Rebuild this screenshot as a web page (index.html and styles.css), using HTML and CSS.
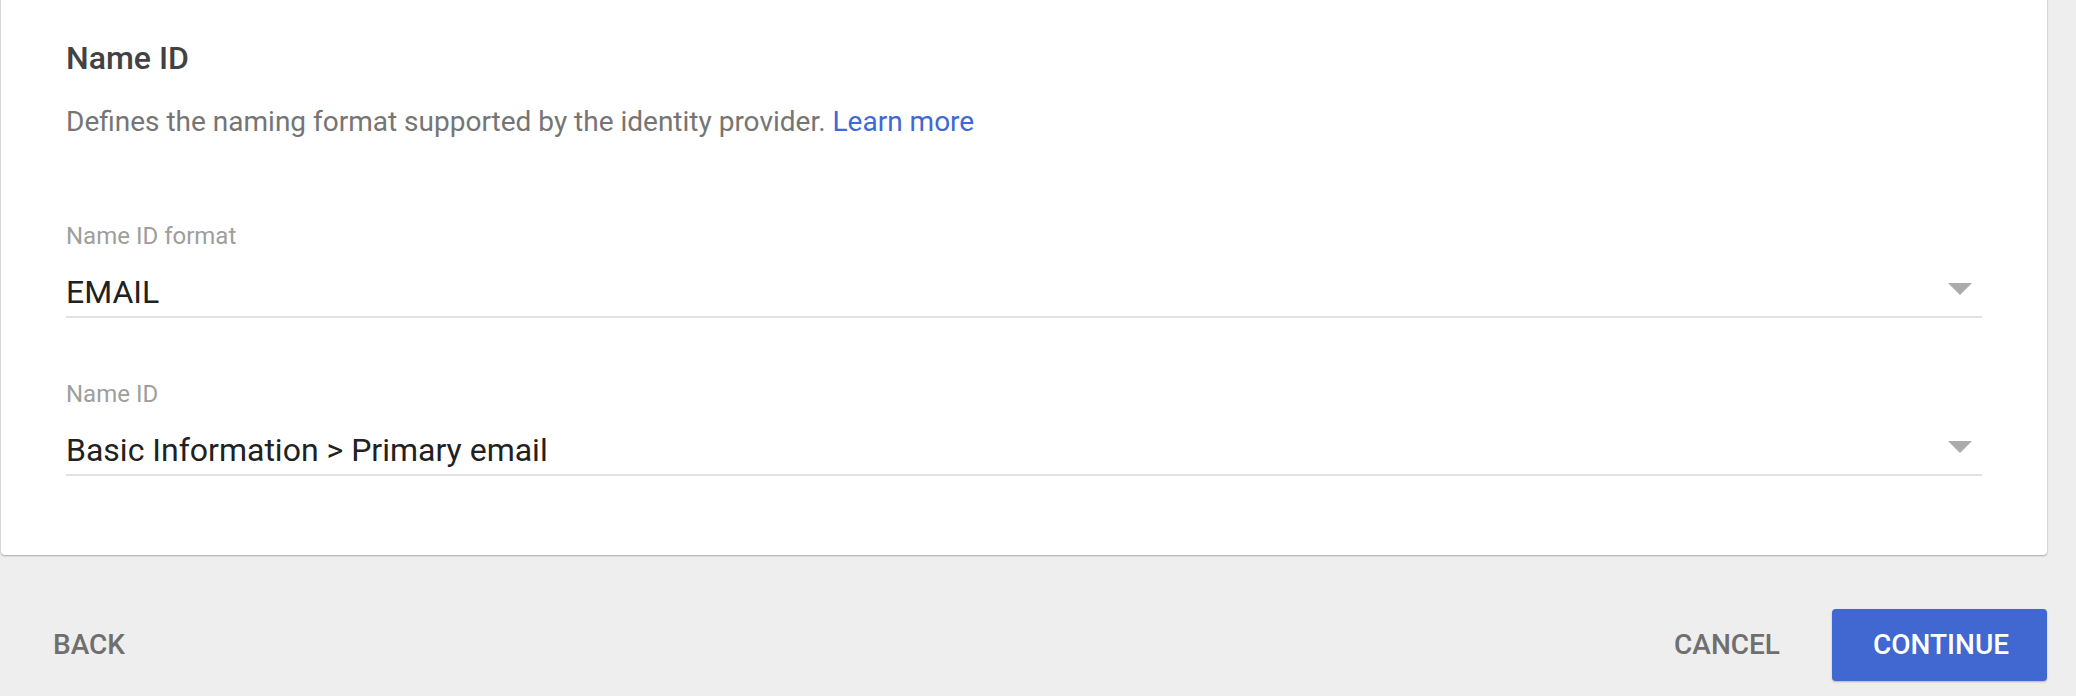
FILE: index.html
```html
<!DOCTYPE html>
<html lang="en">
<head>
<meta charset="utf-8">
<title>Name ID</title>
<link rel="stylesheet" href="styles.css">
</head>
<body>
<main class="page">
  <section class="card">
    <h2 class="card-title">Name ID</h2>
    <p class="card-desc">Defines the naming format supported by the identity provider. <a class="link" href="#">Learn more</a></p>

    <div class="field field-first">
      <div class="field-label">Name ID format</div>
      <div class="select">
        <span class="select-value">EMAIL</span>
        <span class="caret"></span>
      </div>
    </div>

    <div class="field">
      <div class="field-label">Name ID</div>
      <div class="select">
        <span class="select-value">Basic Information &gt; Primary email</span>
        <span class="caret"></span>
      </div>
    </div>
  </section>

  <footer class="actions">
    <button class="btn btn-text btn-back" type="button">Back</button>
    <div class="actions-right">
      <button class="btn btn-text" type="button">Cancel</button>
      <button class="btn btn-primary" type="button">Continue</button>
    </div>
  </footer>
</main>
</body>
</html>
```
FILE: styles.css
```css
* { box-sizing: border-box; }

html, body {
  margin: 0;
  padding: 0;
}

body {
  background: #eeeeee;
  font-family: Roboto, "Liberation Sans", Arial, sans-serif;
  width: 2076px;
  height: 696px;
  overflow: hidden;
}

.page {
  display: flex;
  flex-direction: column;
}

.card {
  margin: -6px 0 0 1px;
  width: 2046px;
  background: #ffffff;
  border-radius: 0 0 4px 4px;
  box-shadow: 0 1px 2px rgba(0, 0, 0, 0.28), 0 0 1px rgba(0, 0, 0, 0.22);
  padding: 44px 65px 79px 65px;
}

.card-title {
  margin: 0;
  font-size: 32px;
  line-height: 40px;
  font-weight: 500;
  color: #424242;
}

.card-desc {
  margin: 26px 0 0 0;
  font-size: 28px;
  line-height: 36px;
  color: #757575;
}

.link {
  color: #3f68d3;
  text-decoration: none;
}

.field {
  margin-top: 60px;
}

.field-first {
  margin-top: 80px;
}

.field-label {
  font-size: 24px;
  line-height: 32px;
  color: #9e9e9e;
}

.select {
  margin-top: 20px;
  display: flex;
  align-items: center;
  justify-content: space-between;
  padding-bottom: 4px;
  border-bottom: 2px solid #e2e2e2;
}

.select-value {
  font-size: 32px;
  line-height: 40px;
  color: #212121;
}

.caret {
  width: 0;
  height: 0;
  border-left: 12px solid transparent;
  border-right: 12px solid transparent;
  border-top: 12px solid #ababab;
  margin: 0 10px 7px 0;
}

.actions {
  margin: 54px 0 0 1px;
  width: 2046px;
  display: flex;
  align-items: center;
  justify-content: space-between;
  padding-left: 26px;
}

.actions-right {
  display: flex;
  align-items: center;
  gap: 26px;
}

.btn {
  font-family: Roboto, "Liberation Sans", Arial, sans-serif;
  font-size: 28px;
  font-weight: 500;
  text-transform: uppercase;
  height: 72px;
  border: 0;
  border-radius: 4px;
  background: transparent;
  cursor: pointer;
  line-height: 72px;
}

.btn-text {
  color: #6f6f6f;
  padding: 0 26px;
}

.btn-primary {
  background: #4167d0;
  color: #ffffff;
  padding: 0 41px;
  width: 215px;
  box-shadow: 0 1px 2px rgba(0, 0, 0, 0.25);
}
```
